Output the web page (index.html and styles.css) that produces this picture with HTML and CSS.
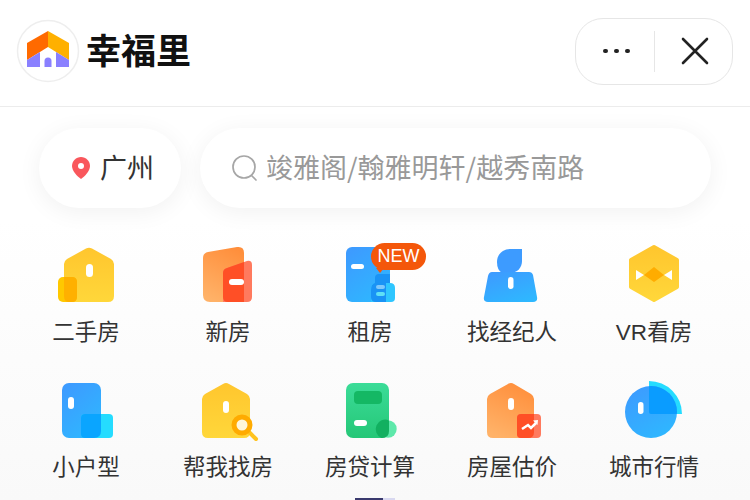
FILE: index.html
```html
<!DOCTYPE html>
<html lang="zh-CN">
<head>
    <meta charset="UTF-8">
    <meta name="viewport" content="width=device-width, initial-scale=1.0">
    <title>幸福里</title>
    <link rel="stylesheet" href="styles.css">
</head>
<body>
    <svg class="defs" width="0" height="0">
        <defs>
            <linearGradient id="yellow" x1="0" y1="0" x2="0" y2="1"><stop offset="0" stop-color="#ffc62e"/><stop offset="1" stop-color="#ffd73a"/></linearGradient>
            <linearGradient id="orange" x1="0.7" y1="0" x2="0.3" y2="1"><stop offset="0" stop-color="#ff8f3c"/><stop offset="1" stop-color="#ffb268"/></linearGradient>
            <linearGradient id="blue" x1="0.2" y1="0" x2="0.8" y2="1"><stop offset="0" stop-color="#3d9bff"/><stop offset="1" stop-color="#2eb8ff"/></linearGradient>
            <linearGradient id="green" x1="0.5" y1="0" x2="0.5" y2="1"><stop offset="0" stop-color="#3bdc98"/><stop offset="1" stop-color="#25c777"/></linearGradient>
            <clipPath id="city-clip"><circle cx="29" cy="33" r="26"/></clipPath>
        </defs>
    </svg>

    <header class="topbar">
        <div class="brand">
            <svg class="logo" viewBox="0 0 64 64">
                <circle cx="32" cy="32" r="30.5" fill="#fff" stroke="#eeeeee" stroke-width="1.5"/>
                <path d="M32 12 11 24V41L32 28Z" fill="#ff6a00"/>
                <path d="M32 12 53 24V41L32 28Z" fill="#ffb000"/>
                <path d="M11 41 24 33V48H11Z" fill="#8a80ff"/>
                <path d="M53 41 40 33V48H53Z" fill="#8a80ff"/>
                <path d="M28.500 48V42a3.500 3.500 0 0 1 7 0V48Z" fill="#8a80ff"/>
            </svg>
            <span class="brand-name">幸福里</span>
        </div>
        <div class="capsule">
            <div class="capsule-more">
                <i class="dot"></i><i class="dot"></i><i class="dot"></i>
            </div>
            <div class="capsule-close">
                <svg viewBox="0 0 30 30" width="30" height="30"><path d="M3 3 27 27M27 3 3 27" stroke="#222" stroke-width="2.6" stroke-linecap="round"/></svg>
            </div>
        </div>
    </header>

    <section class="search-row">
        <div class="city pill">
            <svg viewBox="0 0 20 24" width="20" height="24"><path d="M10 1C5 1 1 5 1 10c0 5 5 10 9 13 4-3 9-8 9-13 0-5-4-9-9-9Z" fill="#f9575c"/><circle cx="10" cy="10" r="3" fill="#fff"/></svg>
            <span>广州</span>
        </div>
        <div class="search pill">
            <svg viewBox="0 0 28 28" width="28" height="28"><circle cx="13" cy="13" r="11" fill="none" stroke="#a6a6a6" stroke-width="1.7"/><path d="M20.500 21.500 25 26" stroke="#a6a6a6" stroke-width="1.7" stroke-linecap="round"/></svg>
            <span>竣雅阁/翰雅明轩/越秀南路</span>
        </div>
    </section>

    <main class="menu">
        <a class="item">
            <svg class="icon" viewBox="0 0 64 64">
                <path d="M32 4.500Q35 3 38 4.500L57 15Q60 17 60 20V52Q60 58 54 58H16Q10 58 10 52V20Q10 17 13 15Z" fill="url(#yellow)"/>
                <rect x="4" y="33" width="19" height="25" rx="5" fill="#ffc800"/>
                <path d="M10 33H18Q23 33 23 38V53Q23 58 18 58H15Q10 58 10 52Z" fill="#ffb000"/>
                <rect x="32" y="20" width="7" height="13" rx="3.500" fill="#fff"/>
            </svg>
            <span>二手房</span>
        </a>
        <a class="item">
            <svg class="icon" viewBox="0 0 64 64">
                <path d="M7 14Q7 9 12 8L41 3Q48 2 48 9V58H14Q7 58 7 51Z" fill="url(#orange)"/>
                <path d="M27 29Q27 25 31 24L51 17Q56 16 56 21V53Q56 58 51 58H27Z" fill="#ff7a5e"/>
                <path d="M27 29Q27 25 31 24L48 18V58H32Q27 58 27 53Z" fill="#ff4f26"/>
                <rect x="33" y="35" width="15" height="6" rx="3" fill="#fff"/>
            </svg>
            <span>新房</span>
        </a>
        <a class="item">
            <svg class="icon" viewBox="0 0 64 64">
                <rect x="8" y="3" width="44" height="55" rx="6" fill="url(#blue)"/>
                <path d="M33 46Q33 39 37 39H52Q57 39 57 44V54Q57 58 53 58H33Z" fill="#2fc6ff"/>
                <path d="M33 46Q33 40 37 39V34Q37 30 41 30H48V58H38Q33 58 33 53Z" fill="#1a93f5"/>
                <path d="M48 30H52V39H48Z" fill="#1a93f5"/>
                <rect x="13" y="20" width="13" height="5" rx="2.500" fill="#fff"/>
                <rect x="38" y="41" width="9" height="4" rx="2" fill="#7fc8fb"/>
                <rect x="38" y="48" width="9" height="4" rx="2" fill="#5fe0f5"/>
            </svg>
            <span class="badge">NEW</span>
            <span>租房</span>
        </a>
        <a class="item">
            <svg class="icon" viewBox="0 0 64 64">
                <path d="M17 18C17 10 23 5 31 5H42V17C42 24 37 29 30 29H22Q17 26 17 18Z" fill="#3d9bff"/>
                <path d="M12 28H49Q52 28 53 31L57 53Q58 58 53 58H8Q3 58 4 53L8 32Q9 28 12 28Z" fill="url(#blue)"/>
                <rect x="28" y="33" width="5.500" height="12" rx="2.700" fill="#fff"/>
            </svg>
            <span>找经纪人</span>
        </a>
        <a class="item">
            <svg class="icon" viewBox="0 0 64 64">
                <path d="M32 3 55 16V43L32 56 9 43V16Z" fill="url(#yellow)" stroke="url(#yellow)" stroke-width="4" stroke-linejoin="round"/>
                <path d="M14 26 22 31 14 36ZM50 26 42 31 50 36Z" fill="#fff"/>
                <path d="M32 23 42 31 32 38 22 31Z" fill="#ffac00"/>
            </svg>
            <span><span class="latin">VR</span>看房</span>
        </a>
        <a class="item">
            <svg class="icon" viewBox="0 0 64 64">
                <rect x="8" y="4" width="39" height="55" rx="7" fill="url(#blue)"/>
                <rect x="27" y="35" width="32" height="24" rx="4" fill="#25dcff"/>
                <path d="M31 35H47V52Q47 59 40 59H31Q27 59 27 55V39Q27 35 31 35Z" fill="#0aa5ff"/>
                <rect x="14" y="18" width="6" height="12" rx="3" fill="#fff"/>
            </svg>
            <span>小户型</span>
        </a>
        <a class="item">
            <svg class="icon" viewBox="0 0 64 64">
                <path d="M27 5Q30 3 33 5L51 15Q54 17 54 20V53Q54 59 48 59H12Q6 59 6 53V20Q6 17 9 15Z" fill="url(#yellow)"/>
                <rect x="27" y="22" width="6" height="12" rx="3" fill="#fff"/>
                <path d="M53 53 60 60" stroke="#ffc31f" stroke-width="4" stroke-linecap="round"/>
                <circle cx="46" cy="46" r="8" fill="#fff6d8" stroke="#ffab00" stroke-width="5"/>
            </svg>
            <span>帮我找房</span>
        </a>
        <a class="item">
            <svg class="icon" viewBox="0 0 64 64">
                <rect x="8" y="4" width="43" height="55" rx="7" fill="url(#green)"/>
                <circle cx="50" cy="50" r="8.700" fill="#5ee8aa"/>
                <path d="M51 41.400V52Q51 59 44 59H43.500A8.700 8.700 0 0 1 51 41.400Z" fill="#12b060"/>
                <rect x="16" y="12" width="28" height="13" rx="4" fill="#14b864"/>
                <rect x="16" y="41" width="13" height="6" rx="3" fill="#fff"/>
            </svg>
            <span>房贷计算</span>
        </a>
        <a class="item">
            <svg class="icon" viewBox="0 0 64 64">
                <path d="M28 5Q31 3 34 5L51 15Q54 17 54 20V53Q54 59 48 59H13Q7 59 7 53V20Q7 17 10 15Z" fill="url(#orange)"/>
                <rect x="37" y="35" width="24" height="24" rx="4" fill="#ff7a5e"/>
                <path d="M41 35H54V53Q54 59 48 59H41Q37 59 37 55V39Q37 35 41 35Z" fill="#ff4f26"/>
                <rect x="28" y="19" width="6" height="12" rx="3" fill="#fff"/>
                <path d="M42 50 48 46 51 49 56 44" fill="none" stroke="#fff" stroke-width="2.500"/>
                <path d="M53 41.500 58 41 57.500 46Z" fill="#fff"/>
            </svg>
            <span>房屋估价</span>
        </a>
        <a class="item">
            <svg class="icon" viewBox="0 0 64 64">
                <path d="M27 2A33 33 0 0 1 60 35H29Q27 35 27 33Z" fill="#25dcff"/>
                <circle cx="29" cy="33" r="26" fill="url(#blue)"/>
                <path d="M27 2A33 33 0 0 1 60 35H29Q27 35 27 33Z" fill="#0a9cff" clip-path="url(#city-clip)"/>
                <rect x="16" y="23" width="5.500" height="12" rx="2.700" fill="#fff"/>
            </svg>
            <span>城市行情</span>
        </a>
    </main>
    <div class="peek"></div>
</body>
</html>
```

FILE: styles.css
```css
html, body {
    margin: 0;
    height: 500px;
    overflow: hidden;
}
body {
    font-family: 'Noto Sans CJK SC', 'Liberation Sans', sans-serif;
    color: #333;
    background: linear-gradient(#fff 220px, #f9f9f9 500px);
}
.defs {
    display: block;
    height: 0;
}
.topbar {
    display: flex;
    justify-content: space-between;
    align-items: center;
    height: 107px;
    padding: 0 17px 4px 16px;
    box-sizing: border-box;
    background-color: #fff;
    border-bottom: 1px solid #ececec;
}
.brand {
    display: flex;
    align-items: center;
    gap: 6px;
}
.logo {
    width: 64px;
    height: 64px;
}
.brand-name {
    margin-bottom: 6px;
    font-size: 35px;
    font-weight: 700;
    color: #111;
}
.capsule {
    display: flex;
    align-items: center;
    width: 158px;
    height: 67px;
    box-sizing: border-box;
    background-color: #fff;
    border: 1px solid #e6e6e6;
    border-radius: 28px;
}
.capsule-more {
    display: flex;
    justify-content: center;
    align-items: center;
    gap: 6.5px;
    width: 79px;
    height: 41px;
    padding-left: 3px;
    box-sizing: border-box;
    border-right: 1px solid #e6e6e6;
}
.dot {
    width: 4.5px;
    height: 4.5px;
    border-radius: 50%;
    background-color: #222;
}
.capsule-close {
    flex: 1;
    display: flex;
    justify-content: center;
    padding-left: 2px;
}
.search-row {
    display: flex;
    gap: 19px;
    padding: 21px 39px 0;
}
.pill {
    display: flex;
    align-items: center;
    height: 80px;
    background-color: #fff;
    border-radius: 40px;
    box-shadow: 0 4px 24px rgba(0, 0, 0, 0.06);
}
.pill span {
    margin-bottom: 4px;
}
.city {
    width: 142px;
    padding-left: 32px;
    gap: 9px;
    box-sizing: border-box;
    font-size: 27px;
}
.search {
    width: 511px;
    padding-left: 31px;
    gap: 7px;
    box-sizing: border-box;
    font-size: 27px;
    color: #999;
}
.menu {
    display: grid;
    grid-template-columns: repeat(5, 142px);
    grid-template-rows: 135px 119px;
    padding: 36px 0 0 15px;
}
.item {
    position: relative;
    display: flex;
    flex-direction: column;
    align-items: center;
    gap: 5px;
    font-size: 22.5px;
    line-height: 34px;
}
.icon {
    width: 64px;
    height: 64px;
}
.latin {
    font-family: 'Liberation Sans', sans-serif;
}
.badge {
    position: absolute;
    left: 72px;
    top: -1px;
    width: 55px;
    height: 27px;
    background-color: #f4570a;
    border-radius: 14px;
    color: #fff;
    font-family: 'Liberation Sans', sans-serif;
    font-size: 18px;
    line-height: 27px;
    text-align: center;
}
.badge::after {
    content: "";
    position: absolute;
    left: 5px;
    top: 25px;
    border-left: 4px solid transparent;
    border-right: 4px solid transparent;
    border-top: 5px solid #f4570a;
}
.peek {
    width: 40px;
    height: 2px;
    margin-left: 355px;
    background: linear-gradient(90deg, #3a3a6e 70%, #d8d8f0 70%);
}
```
